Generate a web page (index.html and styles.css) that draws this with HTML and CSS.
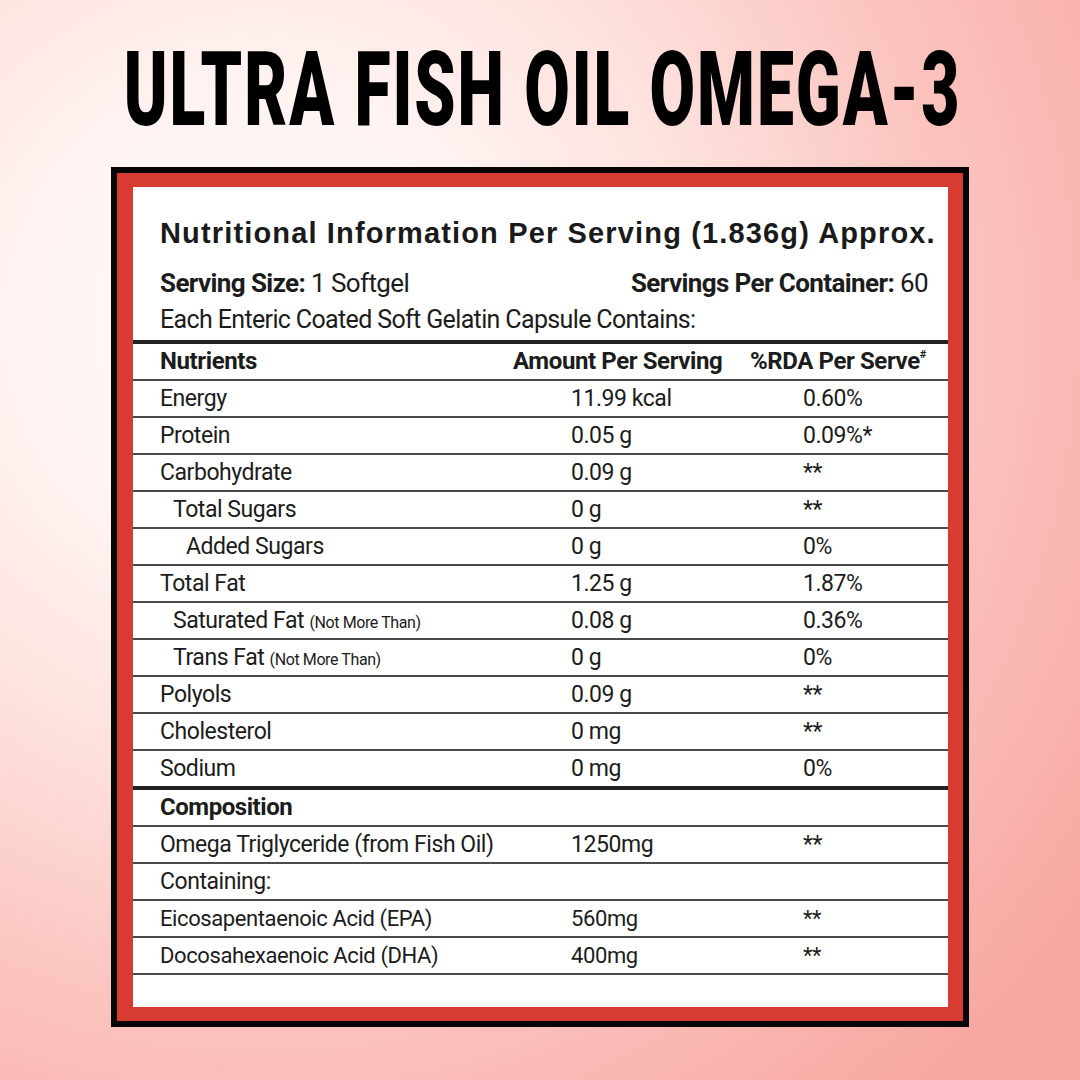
FILE: index.html
```html
<!DOCTYPE html>
<html lang="en">
<head>
<meta charset="utf-8">
<title>Ultra Fish Oil Omega-3</title>
<link rel="stylesheet" href="styles.css">
</head>
<body>
<main class="page">
  <h1 class="title"><span class="title-text">ULTRA FISH OIL OMEGA-3</span></h1>
  <section class="frame">
    <div class="panel">
      <h2 class="heading">Nutritional Information Per Serving (1.836g) Approx.</h2>
      <div class="serving">
        <span><b>Serving Size:</b> 1 Softgel</span>
        <span><b>Servings Per Container:</b> 60</span>
      </div>
      <p class="each">Each Enteric Coated Soft Gelatin Capsule Contains:</p>
      <div class="table">
        <div class="row head">
          <div class="c1">Nutrients</div>
          <div class="c2">Amount Per Serving</div>
          <div class="c3">%RDA Per Serve<sup>#</sup></div>
        </div>
        <div class="row"><div class="c1">Energy</div><div class="c2">11.99 kcal</div><div class="c3">0.60%</div></div>
        <div class="row"><div class="c1">Protein</div><div class="c2">0.05 g</div><div class="c3">0.09%*</div></div>
        <div class="row"><div class="c1">Carbohydrate</div><div class="c2">0.09 g</div><div class="c3">**</div></div>
        <div class="row"><div class="c1 ind1">Total Sugars</div><div class="c2">0 g</div><div class="c3">**</div></div>
        <div class="row"><div class="c1 ind2">Added Sugars</div><div class="c2">0 g</div><div class="c3">0%</div></div>
        <div class="row"><div class="c1">Total Fat</div><div class="c2">1.25 g</div><div class="c3">1.87%</div></div>
        <div class="row"><div class="c1 ind1">Saturated Fat <small>(Not More Than)</small></div><div class="c2">0.08 g</div><div class="c3">0.36%</div></div>
        <div class="row"><div class="c1 ind1">Trans Fat <small>(Not More Than)</small></div><div class="c2">0 g</div><div class="c3">0%</div></div>
        <div class="row"><div class="c1">Polyols</div><div class="c2">0.09 g</div><div class="c3">**</div></div>
        <div class="row"><div class="c1">Cholesterol</div><div class="c2">0 mg</div><div class="c3">**</div></div>
        <div class="row thick"><div class="c1">Sodium</div><div class="c2">0 mg</div><div class="c3">0%</div></div>
        <div class="row"><div class="c1 bold">Composition</div><div class="c2"></div><div class="c3"></div></div>
        <div class="row"><div class="c1">Omega Triglyceride (from Fish Oil)</div><div class="c2">1250mg</div><div class="c3">**</div></div>
        <div class="row"><div class="c1">Containing:</div><div class="c2"></div><div class="c3"></div></div>
        <div class="row sm"><div class="c1">Eicosapentaenoic Acid (EPA)</div><div class="c2">560mg</div><div class="c3">**</div></div>
        <div class="row sm"><div class="c1">Docosahexaenoic Acid (DHA)</div><div class="c2">400mg</div><div class="c3">**</div></div>
      </div>
    </div>
  </section>
</main>
</body>
</html>
```
FILE: styles.css
```css
html, body {
  margin: 0;
  padding: 0;
}
body {
  width: 1080px;
  height: 1080px;
  overflow: hidden;
  background: radial-gradient(ellipse 95% 95% at 24% 30%, #fffcfb 0%, #fff4f2 22%, #fde0dc 45%, #fbc3be 68%, #f8a6a0 100%);
  font-family: Roboto, "Liberation Sans", Arial, sans-serif;
  color: #1c1c1c;
}
.page {
  display: flex;
  flex-direction: column;
  align-items: center;
  padding-top: 38px;
}
.title {
  margin: 0;
  height: 104px;
  font-family: Roboto, "Liberation Sans", sans-serif;
  font-weight: 900;
  font-size: 104px;
  line-height: 104px;
  color: #000;
  white-space: nowrap;
  display: flex;
  justify-content: center;
  width: 1080px;
}
.title-text {
  display: inline-block;
  transform: scaleX(0.635);
  transform-origin: center;
  letter-spacing: 3px;
  margin-left: 6px;
}
.frame {
  margin-top: 25px;
  width: 815px;
  border: 6px solid #050505;
  background: #d83b31;
  padding: 14px 15px 14px 16px;
}
.panel {
  background: #fff;
  height: 820px;
  padding-top: 29px;
  box-sizing: border-box;
}
.heading {
  margin: 0 0 0 27px;
  font-family: "Liberation Sans", Arial, sans-serif;
  font-weight: 700;
  font-size: 29px;
  line-height: 34px;
  letter-spacing: 1.15px;
  color: #1a1a1a;
}
.serving {
  margin: 18px 20px 0 27px;
  display: flex;
  justify-content: space-between;
  font-size: 26px;
  line-height: 30px;
  letter-spacing: -0.6px;
}
.each {
  margin: 7px 0 0 27px;
  font-size: 25px;
  line-height: 30px;
  letter-spacing: -0.64px;
}
.table {
  margin-top: 5px;
  border-top: 4px solid #222;
}
.row {
  display: grid;
  grid-template-columns: 380px 237px 198px;
  height: 35px;
  line-height: 35px;
  font-size: 23px;
  letter-spacing: -0.45px;
  border-bottom: 2px solid #4a4a4a;
  white-space: nowrap;
}
.row.thick {
  border-bottom: 4px solid #222;
}
.row.sm {
  font-size: 22px;
  letter-spacing: -0.4px;
}
.c1 {
  padding-left: 27px;
}
.c1.ind1 {
  padding-left: 40px;
}
.c1.ind2 {
  padding-left: 53px;
}
.c2 {
  padding-left: 58px;
}
.c3 {
  padding-left: 53px;
}
.row.head {
  font-weight: 700;
  font-size: 24px;
  letter-spacing: -0.4px;
}
.row.head .c2,
.row.head .c3 {
  padding-left: 0;
}
.row.head sup {
  font-size: 11px;
  line-height: 0;
  vertical-align: 11px;
  letter-spacing: 0;
}
.bold {
  font-weight: 700;
  font-size: 24px;
}
small {
  font-size: 16px;
  letter-spacing: -0.4px;
}
```
